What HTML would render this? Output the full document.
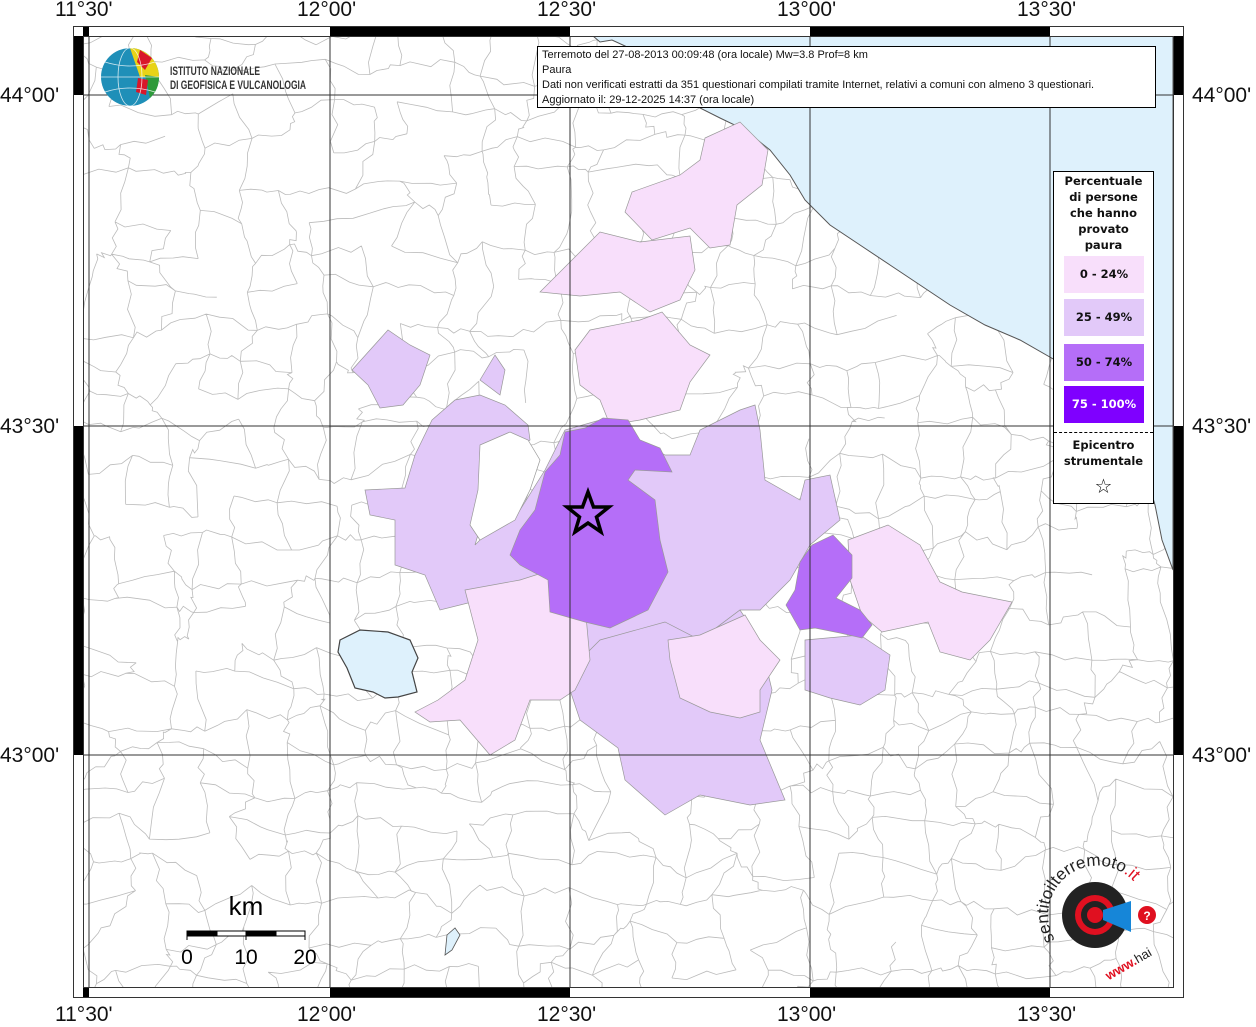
<!DOCTYPE html>
<html><head><meta charset="utf-8"><style>
html,body{margin:0;padding:0;background:#fff;}
body{width:1256px;height:1024px;overflow:hidden;position:relative;font-family:"Liberation Sans",sans-serif;}
.lab{position:absolute;font-size:21px;color:#111;white-space:nowrap;}
</style></head><body>
<svg width="1256" height="1024" style="position:absolute;left:0;top:0" xmlns="http://www.w3.org/2000/svg">
<defs><clipPath id="mc"><rect x="83" y="36" width="1090" height="951"/></clipPath></defs>
<g clip-path="url(#mc)">
<rect x="83" y="36" width="1090" height="951" fill="#fff"/>
<g id="borders" fill="none" stroke="#bbb" stroke-width="0.8"></g>
<!-- sea -->
<path d="M593,36 L600,42 L612,40 L625,46 L640,55 L660,70 L680,90 L700,108 L720,118 L745,130 L770,150 L790,175 L805,200 L830,225 L860,245 L890,265 L920,285 L950,305 L985,325 L1020,340 L1055,360 L1085,385 L1110,410 L1130,440 L1145,470 L1155,505 L1162,540 L1173,570 L1173,36 Z" fill="#def1fc" stroke="#555" stroke-width="1"/>
<g stroke="#999" stroke-width="0.7">
<!-- big lavender -->
<path fill="#e2c9f9" d="M365,490 L405,488 L415,455 L432,420 L455,400 L480,395 L505,405 L528,425 L530,440 L505,460 L488,500 L475,545 L500,520 L520,510 L545,470 L560,440 L565,430 L600,420 L640,440 L665,455 L690,455 L700,430 L740,410 L755,405 L760,430 L765,480 L800,500 L805,480 L830,475 L840,520 L810,545 L790,580 L760,610 L740,610 L700,640 L665,650 L620,670 L590,660 L560,615 L520,580 L480,600 L440,610 L425,575 L410,570 L395,565 L395,520 L370,515 Z"/>
<path fill="#e2c9f9" d="M575,665 L600,640 L665,622 L700,640 L740,610 L760,640 L772,690 L760,740 L785,800 L750,805 L700,795 L665,815 L625,780 L618,748 L580,720 L570,690 Z"/>
<path fill="#e2c9f9" d="M352,370 L388,330 L410,345 L430,355 L420,385 L403,405 L380,408 L368,385 Z"/>
<path fill="#e2c9f9" d="M480,380 L495,355 L505,370 L500,395 Z"/>
<path fill="#e2c9f9" d="M805,640 L860,635 L890,655 L885,690 L860,705 L830,698 L805,690 Z"/>
<!-- light pink -->
<path fill="#f8dffb" d="M705,138 L740,122 L768,150 L762,185 L737,205 L730,245 L710,248 L690,228 L652,240 L625,212 L632,192 L680,175 L700,160 Z"/>
<path fill="#f8dffb" d="M540,292 L570,262 L600,232 L640,242 L690,236 L695,270 L680,300 L650,312 L620,292 L580,296 Z"/>
<path fill="#f8dffb" d="M590,330 L640,320 L662,312 L690,345 L710,355 L690,382 L680,410 L640,420 L610,425 L600,400 L580,385 L575,350 Z"/>
<path fill="#f8dffb" d="M465,590 L520,580 L545,572 L585,605 L590,660 L575,690 L560,700 L530,700 L515,740 L490,755 L460,720 L430,722 L415,712 L438,700 L465,680 L478,640 Z"/>
<path fill="#f8dffb" d="M848,540 L888,525 L920,545 L940,582 L962,592 L1012,602 L990,640 L970,660 L940,652 L928,622 L882,632 L862,615 L850,580 Z"/>
<path fill="#f8dffb" d="M668,640 L700,635 L745,615 L760,640 L780,660 L760,690 L760,712 L740,718 L710,712 L680,698 L670,660 Z"/>
<!-- white holes -->
<path fill="#fff" d="M480,445 L510,432 L528,440 L540,460 L530,490 L515,520 L480,540 L470,525 L478,490 Z"/>
<!-- purple 50-74 -->
<path fill="#b56ef8" d="M565,432 L585,428 L603,418 L628,420 L640,440 L660,448 L672,472 L635,470 L628,480 L655,500 L660,540 L668,572 L648,610 L610,628 L585,622 L550,612 L548,580 L520,565 L510,555 L520,530 L535,510 L545,472 L560,455 Z"/>
<path fill="#b56ef8" d="M800,562 L812,545 L833,535 L852,555 L852,578 L836,598 L860,610 L872,625 L862,638 L840,633 L815,628 L800,630 L786,605 L795,590 Z"/>
</g>
<!-- lake -->
<path d="M340,640 L360,630 L388,632 L410,640 L418,658 L412,672 L417,692 L398,697 L385,698 L373,692 L355,688 L347,668 L338,652 Z" fill="#def1fc" stroke="#444" stroke-width="1.2"/>
<path d="M447,935 L455,928 L460,935 L452,950 L445,955 Z" fill="#def1fc" stroke="#555" stroke-width="0.8"/>
<!-- grid -->
<g stroke="#333" stroke-width="1">
<line x1="330" y1="36" x2="330" y2="987"/><line x1="570" y1="36" x2="570" y2="987"/><line x1="810" y1="36" x2="810" y2="987"/><line x1="1050" y1="36" x2="1050" y2="987"/>
<line x1="83" y1="95" x2="1173" y2="95"/><line x1="83" y1="426" x2="1173" y2="426"/><line x1="83" y1="755" x2="1173" y2="755"/>
<line x1="89" y1="36" x2="89" y2="987"/>
</g>
<!-- star -->
<polygon points="588,492 593.5,507 609,507 596.5,517 601,532 588,523 575,532 579.5,517 567,507 582.5,507" fill="none" stroke="#000" stroke-width="3.5" stroke-linejoin="miter"/>
</g>
<!-- frame -->
<g stroke="#333" stroke-width="1">
<rect x="73.5" y="26.5" width="1110" height="971" fill="none"/>
<rect x="83.5" y="36.5" width="1090" height="951" fill="none"/>
</g>
<g fill="#000">
<rect x="330" y="27" width="240" height="9"/><rect x="810" y="27" width="240" height="9"/>
<rect x="330" y="988" width="240" height="9"/><rect x="810" y="988" width="240" height="9"/>
<rect x="74" y="36" width="9" height="59"/><rect x="74" y="426" width="9" height="329"/>
<rect x="1174" y="36" width="9" height="59"/><rect x="1174" y="426" width="9" height="329"/>
<rect x="83" y="27" width="6" height="9"/><rect x="83" y="988" width="6" height="9"/>
</g>
<!-- scale bar -->
<g stroke="#000" stroke-width="1">
<rect x="187" y="931" width="30" height="5" fill="#000"/><rect x="217" y="931" width="29" height="5" fill="#fff"/>
<rect x="246" y="931" width="30" height="5" fill="#000"/><rect x="276" y="931" width="29" height="5" fill="#fff"/>
<line x1="187" y1="931" x2="187" y2="940"/><line x1="246" y1="931" x2="246" y2="940"/><line x1="305" y1="931" x2="305" y2="940"/>
</g>
<text x="246" y="915" font-family="Liberation Sans" font-size="26" text-anchor="middle">km</text>
<text x="187" y="964" font-family="Liberation Sans" font-size="21" text-anchor="middle">0</text>
<text x="246" y="964" font-family="Liberation Sans" font-size="21" text-anchor="middle">10</text>
<text x="305" y="964" font-family="Liberation Sans" font-size="21" text-anchor="middle">20</text>
<!-- INGV logo -->
<circle cx="130" cy="77" r="29" fill="#1f8fb8"/>
<path d="M130,48 A29,29 0 0 1 159,77 L140,77 Z" fill="#e8d317"/>
<path d="M140,50 L152,58 L145,70 L137,62 Z" fill="#d9172a"/>
<path d="M145,75 L159,77 A29,29 0 0 1 150,98 Z" fill="#2e9a3a"/>
<path d="M138,78 L148,80 L146,95 L136,92 Z" fill="#d9172a"/>
<g stroke="#fff" stroke-width="0.8" fill="none" opacity="0.8"><ellipse cx="130" cy="77" rx="12" ry="29"/><line x1="101" y1="77" x2="159" y2="77"/><path d="M105,62 Q130,70 155,62"/><path d="M105,92 Q130,84 155,92"/></g>
<text x="170" y="75" font-family="Liberation Sans" font-size="12" font-weight="bold" fill="#333" textLength="90" lengthAdjust="spacingAndGlyphs">ISTITUTO NAZIONALE</text>
<text x="170" y="89" font-family="Liberation Sans" font-size="12" font-weight="bold" fill="#333" textLength="136" lengthAdjust="spacingAndGlyphs">DI GEOFISICA E VULCANOLOGIA</text>
<!-- haisentito logo -->
<circle cx="1095" cy="915" r="33" fill="#222"/>
<circle cx="1095" cy="915" r="20" fill="#e01020"/>
<circle cx="1095" cy="915" r="14" fill="#222"/>
<circle cx="1095" cy="915" r="8" fill="#e01020"/>
<path d="M1103,910 L1131,901 L1131,932 L1103,920 Z" fill="#1686d8"/>
<circle cx="1147" cy="915" r="9" fill="#e01020"/>
<text x="1147" y="920" font-size="12" fill="#fff" text-anchor="middle" font-weight="bold">?</text>
<path id="arc" d="M1055,940 A45,45 0 1 1 1140,890" fill="none"/>
<text font-family="Liberation Sans" font-size="17" fill="#222"><textPath href="#arc">sentitoilterremoto<tspan fill="#e01020">.it</tspan></textPath></text>
<text x="1100" y="972" font-size="13" fill="#e01020" font-weight="bold" transform="rotate(-30 1120 960)">www.<tspan fill="#222" font-weight="normal">hai</tspan></text>
</svg>
<!-- info box -->
<div style="position:absolute;left:537px;top:46px;width:619px;height:62px;border:1px solid #000;background:#fff;font-size:11px;line-height:15px;padding:1px 4px;box-sizing:border-box;color:#111;white-space:nowrap">Terremoto del 27-08-2013 00:09:48 (ora locale) Mw=3.8 Prof=8 km<br>Paura<br>Dati non verificati estratti da 351 questionari compilati tramite Internet, relativi a comuni con almeno 3 questionari.<br>Aggiornato il: 29-12-2025 14:37 (ora locale)</div>
<!-- legend -->
<div style="position:absolute;left:1053px;top:171px;width:101px;height:333px;border:1px solid #000;background:#fff;box-sizing:border-box;font-family:'DejaVu Sans',sans-serif;font-weight:bold;font-size:11.5px;text-align:center;color:#111">
<div style="line-height:16px;margin-top:1px">Percentuale<br>di persone<br>che hanno<br>provato<br>paura</div>
<div style="position:absolute;left:10px;top:84px;width:80px;height:37px;background:#f8dffb;line-height:37px">0 - 24%</div>
<div style="position:absolute;left:10px;top:127px;width:80px;height:37px;background:#e2c9f9;line-height:37px">25 - 49%</div>
<div style="position:absolute;left:10px;top:172px;width:80px;height:37px;background:#b56ef8;line-height:37px">50 - 74%</div>
<div style="position:absolute;left:10px;top:214px;width:80px;height:37px;background:#7f00ff;color:#fff;line-height:37px">75 - 100%</div>
<div style="position:absolute;left:0;top:260px;width:99px;border-top:1px dashed #000"></div>
<div style="position:absolute;left:0;top:265px;width:99px;line-height:16px">Epicentro<br>strumentale</div>
<div style="position:absolute;left:0;top:302px;width:99px;font-size:20px;font-weight:normal">☆</div>
</div>
<!-- labels -->
<div class="lab" style="left:55px;top:-2px">11°30'</div>
<div class="lab" style="left:297px;top:-2px">12°00'</div>
<div class="lab" style="left:537px;top:-2px">12°30'</div>
<div class="lab" style="left:777px;top:-2px">13°00'</div>
<div class="lab" style="left:1017px;top:-2px">13°30'</div>
<div class="lab" style="left:55px;top:1003px">11°30'</div>
<div class="lab" style="left:297px;top:1003px">12°00'</div>
<div class="lab" style="left:537px;top:1003px">12°30'</div>
<div class="lab" style="left:777px;top:1003px">13°00'</div>
<div class="lab" style="left:1017px;top:1003px">13°30'</div>
<div class="lab" style="left:0px;top:84px">44°00'</div>
<div class="lab" style="left:0px;top:415px">43°30'</div>
<div class="lab" style="left:0px;top:744px">43°00'</div>
<div class="lab" style="left:1192px;top:84px">44°00'</div>
<div class="lab" style="left:1192px;top:415px">43°30'</div>
<div class="lab" style="left:1192px;top:744px">43°00'</div>
<script>
(function(){
var s=12345;function r(){s=(s*16807)%2147483647;return s/2147483647;}
var g=document.getElementById('borders');var step=40;var pts=[];
for(var y=0;y<=28;y++){pts[y]=[];for(var x=0;x<=29;x++){pts[y][x]=[83+x*step+(r()-0.5)*30,36+y*step*0.9+(r()-0.5)*30];}}
function seg(a,b){var d="M"+a[0].toFixed(1)+","+a[1].toFixed(1);for(var i=1;i<=4;i++){var t=i/4;d+=" L"+(a[0]+(b[0]-a[0])*t+(i<4?(r()-0.5)*8:0)).toFixed(1)+","+(a[1]+(b[1]-a[1])*t+(i<4?(r()-0.5)*8:0)).toFixed(1);}return d;}
var d="";
for(var y=0;y<=28;y++)for(var x=0;x<=29;x++){if(x<29&&r()<0.8)d+=seg(pts[y][x],pts[y][x+1]);if(y<28&&r()<0.8)d+=seg(pts[y][x],pts[y+1][x]);}
var p=document.createElementNS("http://www.w3.org/2000/svg","path");p.setAttribute("d",d);g.appendChild(p);
})();
</script>
</body></html>
